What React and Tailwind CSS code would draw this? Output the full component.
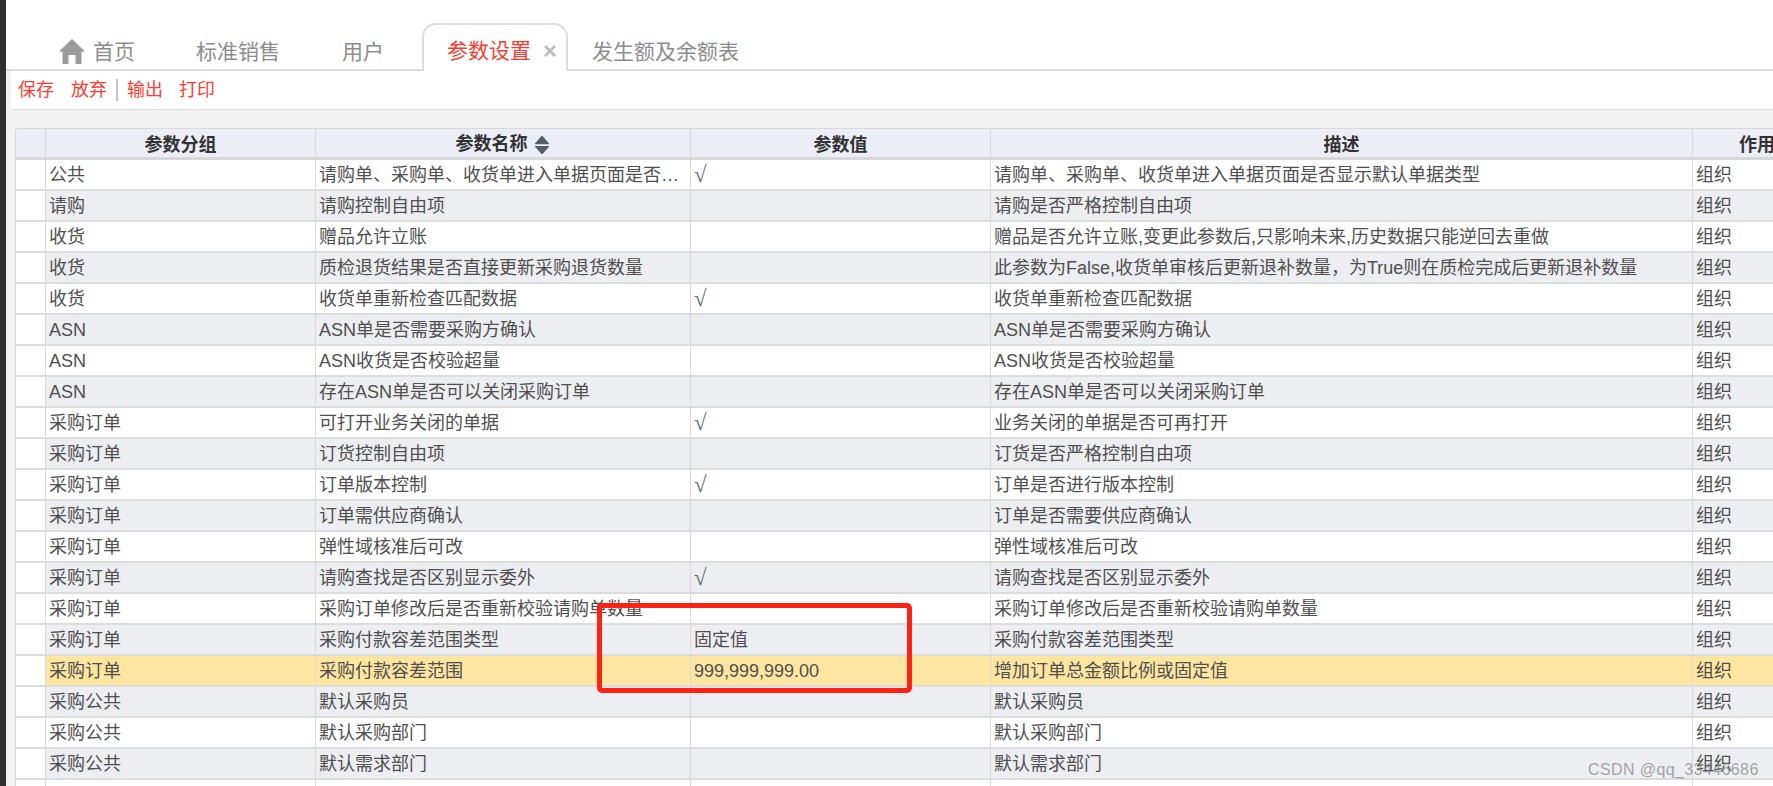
const cols = "grid grid-cols-[30px_270px_375px_300px_702px_148px] w-[1825px]";
const cell = "border-r border-[#d9d9d9] px-[3px] truncate";

const rows = [
  ["公共", "请购单、采购单、收货单进入单据页面是否显示默认单据类型", "√", "请购单、采购单、收货单进入单据页面是否显示默认单据类型"],
  ["请购", "请购控制自由项", "", "请购是否严格控制自由项"],
  ["收货", "赠品允许立账", "", "赠品是否允许立账,变更此参数后,只影响未来,历史数据只能逆回去重做"],
  ["收货", "质检退货结果是否直接更新采购退货数量", "", "此参数为False,收货单审核后更新退补数量，为True则在质检完成后更新退补数量"],
  ["收货", "收货单重新检查匹配数据", "√", "收货单重新检查匹配数据"],
  ["ASN", "ASN单是否需要采购方确认", "", "ASN单是否需要采购方确认"],
  ["ASN", "ASN收货是否校验超量", "", "ASN收货是否校验超量"],
  ["ASN", "存在ASN单是否可以关闭采购订单", "", "存在ASN单是否可以关闭采购订单"],
  ["采购订单", "可打开业务关闭的单据", "√", "业务关闭的单据是否可再打开"],
  ["采购订单", "订货控制自由项", "", "订货是否严格控制自由项"],
  ["采购订单", "订单版本控制", "√", "订单是否进行版本控制"],
  ["采购订单", "订单需供应商确认", "", "订单是否需要供应商确认"],
  ["采购订单", "弹性域核准后可改", "", "弹性域核准后可改"],
  ["采购订单", "请购查找是否区别显示委外", "√", "请购查找是否区别显示委外"],
  ["采购订单", "采购订单修改后是否重新校验请购单数量", "", "采购订单修改后是否重新校验请购单数量"],
  ["采购订单", "采购付款容差范围类型", "固定值", "采购付款容差范围类型"],
  ["采购订单", "采购付款容差范围", "999,999,999.00", "增加订单总金额比例或固定值"],
  ["采购公共", "默认采购员", "", "默认采购员"],
  ["采购公共", "默认采购部门", "", "默认采购部门"],
  ["采购公共", "默认需求部门", "", "默认需求部门"],
];

function HomeIcon() {
  return (
    <svg width="26" height="25" viewBox="0 0 26 25" className="fill-[#9a9a9a]">
      <path d="M13 0 L26 12.5 L22.5 12.5 L22.5 25 L16.5 25 L16.5 16 L9.5 16 L9.5 25 L3.5 25 L3.5 12.5 L0 12.5 Z" />
    </svg>
  );
}

function SortIcon() {
  return (
    <svg width="14" height="18" viewBox="0 0 14 18" className="fill-[#555d6b] ml-[7px]">
      <path d="M6 .5 a1.3 1.3 0 0 1 2 0 L14 7.5 a.6 .6 0 0 1 -.5 .8 H.5 a.6 .6 0 0 1 -.5 -.8 Z" />
      <path d="M.5 10 H13.5 a.6 .6 0 0 1 .5 .8 L8 17.5 a1.3 1.3 0 0 1 -2 0 L0 10.8 a.6 .6 0 0 1 .5 -.8 Z" />
    </svg>
  );
}

function CloseIcon() {
  return (
    <svg width="12" height="12" viewBox="0 0 12 12" className="ml-[13px] stroke-[#bcbcbc]" strokeWidth="3">
      <path d="M1 1 L11 11 M11 1 L1 11" />
    </svg>
  );
}

function Tabs() {
  return (
    <div className="h-[71px] flex items-end border-b-2 border-[#dcdcdc] pl-[53px] text-[21px] text-[#8c8c8c]">
      <div className="h-[35px] flex items-center gap-[8px]">
        <HomeIcon />
        <span>首页</span>
      </div>
      <div className="h-[35px] flex items-center ml-[61px]">标准销售</div>
      <div className="h-[35px] flex items-center ml-[62px]">用户</div>
      <div className="relative top-[2px] h-[48px] w-[146px] ml-[38px] pl-[23px] pt-[5px] flex items-center bg-white border-2 border-b-0 border-[#dcdcdc] rounded-t-[14px] text-[#ff3b2f]">
        <span>参数设置</span>
        <CloseIcon />
      </div>
      <div className="h-[35px] flex items-center ml-[24px]">发生额及余额表</div>
    </div>
  );
}

function Toolbar() {
  return (
    <div className="h-[39px] ml-[5px] bg-white border-b border-[#dddddd] flex items-center pl-[7px] text-[18px] text-[#ff3b2f]">
      <span>保存</span>
      <span className="ml-[17px]">放弃</span>
      <span className="ml-[9px] w-[2px] h-[22px] bg-[#c4c4c4]" />
      <span className="ml-[9px]">输出</span>
      <span className="ml-[16px]">打印</span>
    </div>
  );
}

function Table() {
  return (
    <div className="mt-[18px] ml-[9px] border-l border-t border-[#d9d9d9] rounded-tl-[3px]">
      <div className={`${cols} h-[31px] bg-[#ebeef6] border-b-[3px] border-[#d8d8d8] font-bold text-[#333333] text-center leading-[33px]`}>
        <div className={cell}></div>
        <div className={cell}>参数分组</div>
        <div className={`${cell} flex items-center justify-center pt-[3px] pr-[5px]`}>
          参数名称
          <SortIcon />
        </div>
        <div className={cell}>参数值</div>
        <div className={cell}>描述</div>
        <div className={`${cell} text-left pl-[46px]`}>作用</div>
      </div>
      {rows.map((r, i) => {
        const bg = i === 16 ? "bg-[#fee6a0]" : i % 2 === 1 ? "bg-[#edeef2]" : "bg-white";
        return (
          <div key={i} className={`${cols} h-[31px] border-b-2 border-[#dcdcdc] leading-[30px] text-[#4f4f4f]`}>
            <div className={`${cell} bg-white`}></div>
            <div className={`${cell} ${bg}`}>{r[0]}</div>
            <div className={`${cell} ${bg}`}>{r[1]}</div>
            <div className={`${cell} ${bg}`}>
              {r[2] === "√" ? <span className="font-['Liberation_Serif'] text-[23px] text-[#66707c]">√</span> : r[2]}
            </div>
            <div className={`${cell} ${bg}`}>{r[3]}</div>
            <div className={`${cell} ${bg}`}>组织</div>
          </div>
        );
      })}
      <div className={`${cols} h-[31px]`}>
        {[0, 1, 2, 3, 4, 5].map((n) => (
          <div key={n} className={`${cell} bg-white`}></div>
        ))}
      </div>
    </div>
  );
}

export default function App() {
  return (
    <div
      className="relative h-[786px] w-full overflow-hidden flex bg-white text-[18px]"
      style={{ fontFamily: '"Liberation Sans", "Noto Sans CJK SC", sans-serif' }}
    >
      <div className="w-[6px] shrink-0 bg-[#303030]" />
      <div className="flex-1 min-w-0 overflow-hidden">
        <Tabs />
        <div className="bg-[#f2f2f2] h-full">
          <Toolbar />
          <Table />
        </div>
      </div>
      {/* red annotation drawn over the screenshot */}
      <div className="absolute left-[597px] top-[603px] w-[315px] h-[90px] border-[5px] border-[#ff2214] rounded-[5px]" />
      <div className="absolute left-[1588px] top-[758px] text-[16px] tracking-[0.4px] text-[#808080]/70">CSDN @qq_33446686</div>
    </div>
  );
}
